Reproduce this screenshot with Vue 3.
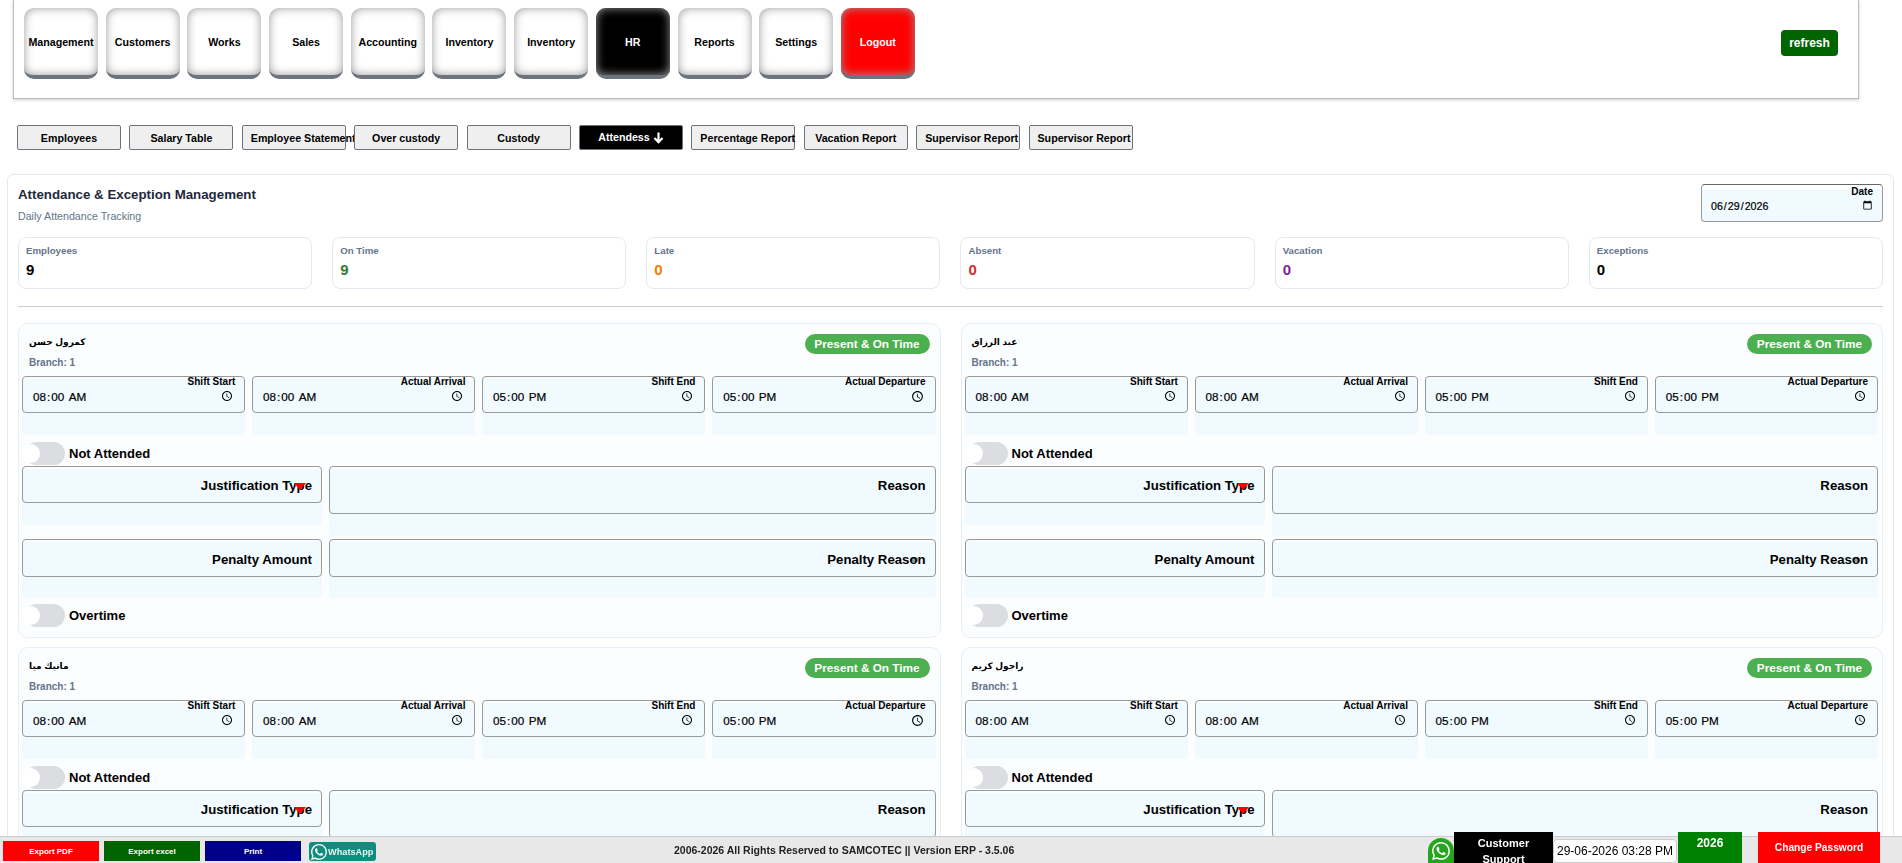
<template>
  <div class="page">
    <header class="topbar">
      <button
        v-for="item in navItems"
        :key="item.id"
        class="nav-btn"
        :class="item.tone"
      >{{ item.label }}</button>
      <button class="refresh">refresh</button>
    </header>

    <nav class="tabs">
      <button v-for="tab in tabs" :key="tab.id" class="tab" :class="{ active: tab.active }">
        {{ tab.label }}
        <svg v-if="tab.active" class="tab-arrow" viewBox="0 0 12 13" width="11" height="13">
          <path d="M6 1v10.5M1.6 7 6 11.6 10.4 7" fill="none" stroke="#fff" stroke-width="2.4" />
        </svg>
      </button>
    </nav>

    <section class="panel">
      <div class="panel-head">
        <div>
          <h1 class="panel-title">Attendance &amp; Exception Management</h1>
          <p class="panel-sub">Daily Attendance Tracking</p>
        </div>
        <div class="date-field">
          <span class="date-label">Date</span>
          <input type="date" value="2026-06-29" />
        </div>
      </div>

      <div class="stats">
        <div v-for="stat in stats" :key="stat.label" class="stat">
          <div class="stat-label">{{ stat.label }}</div>
          <div class="stat-value" :style="{ color: stat.color }">{{ stat.value }}</div>
        </div>
      </div>

      <hr class="divider" />

      <div class="employees">
        <article v-for="emp in employees" :key="emp.name" class="emp">
          <div class="emp-head">
            <div>
              <div class="emp-name" dir="rtl">{{ emp.name }}</div>
              <div class="emp-branch">Branch: {{ emp.branch }}</div>
            </div>
            <span class="pill">Present &amp; On Time</span>
          </div>

          <div class="times">
            <div v-for="t in timeFields" :key="t.label" class="slot">
              <div class="box time-box">
                <span class="time-label">{{ t.label }}</span>
                <input type="time" :value="t.value" />
              </div>
            </div>
          </div>

          <label class="switch-row">
            <span class="switch"><span class="knob"></span></span>
            Not Attended
          </label>

          <div class="pair">
            <div class="slot slot-just">
              <div class="box text-box">
                Justification Type
                <span class="caret"></span>
              </div>
            </div>
            <div class="slot">
              <div class="box text-box tall">Reason</div>
            </div>
          </div>

          <div class="pair second">
            <div class="slot slot-low">
              <div class="box text-box low">Penalty Amount</div>
            </div>
            <div class="slot slot-low">
              <div class="box text-box low">
                <span class="blob"></span>
                <span class="over">Penalty Reason</span>
              </div>
            </div>
          </div>

          <label class="switch-row last">
            <span class="switch"><span class="knob"></span></span>
            Overtime
          </label>
        </article>
      </div>
    </section>

    <footer class="footer">
      <button class="foot-btn pdf">Export PDF</button>
      <button class="foot-btn excel">Export excel</button>
      <button class="foot-btn print">Print</button>
      <a class="wa-btn">
        <svg viewBox="0 0 24 24" width="16" height="16"><path :d="waPath" fill="#fff" /></svg>
        WhatsApp
      </a>
      <div class="copyright">2006-2026 All Rights Reserved to SAMCOTEC || Version ERP - 3.5.06</div>
      <div class="foot-right">
        <span class="wa-round">
          <svg viewBox="0 0 24 24" width="18" height="18"><path :d="waPath" fill="#fff" /></svg>
        </span>
        <div class="support">Customer Support</div>
        <div class="clock">29-06-2026 03:28 PM</div>
        <div class="year">2026</div>
        <button class="change-pass">Change Password</button>
      </div>
    </footer>
  </div>
</template>

<script setup>
const navLabels = ['Management', 'Customers', 'Works', 'Sales', 'Accounting', 'Inventory', 'Inventory', 'HR', 'Reports', 'Settings', 'Logout']
const navItems = navLabels.map((label, id) => ({
  id,
  label,
  tone: label === 'HR' ? 'dark' : label === 'Logout' ? 'danger' : ''
}))

const tabLabels = ['Employees', 'Salary Table', 'Employee Statement', 'Over custody', 'Custody', 'Attendess', 'Percentage Report', 'Vacation Report', 'Supervisor Report', 'Supervisor Report']
const tabs = tabLabels.map((label, id) => ({ id, label, active: label === 'Attendess' }))

const stats = [
  { label: 'Employees', value: 9, color: '#000' },
  { label: 'On Time', value: 9, color: '#2e7d32' },
  { label: 'Late', value: 0, color: '#f57c00' },
  { label: 'Absent', value: 0, color: '#d32f2f' },
  { label: 'Vacation', value: 0, color: '#7b1fa2' },
  { label: 'Exceptions', value: 0, color: '#000' }
]

const timeFields = [
  { label: 'Shift Start', value: '08:00' },
  { label: 'Actual Arrival', value: '08:00' },
  { label: 'Shift End', value: '17:00' },
  { label: 'Actual Departure', value: '17:00' }
]

const employees = [
  { name: 'كمرول حسن', branch: 1 },
  { name: 'عبد الرزاق', branch: 1 },
  { name: 'مانيك ميا', branch: 1 },
  { name: 'راجول كريم', branch: 1 }
]

const waPath = 'M17.472 14.382c-.297-.149-1.758-.867-2.03-.967-.273-.099-.471-.148-.67.15-.197.297-.767.966-.94 1.164-.173.199-.347.223-.644.075-.297-.15-1.255-.463-2.39-1.475-.883-.788-1.48-1.761-1.653-2.059-.173-.297-.018-.458.13-.606.134-.133.298-.347.446-.52.149-.174.198-.298.298-.497.099-.198.05-.371-.025-.52-.075-.149-.669-1.612-.916-2.207-.242-.579-.487-.5-.669-.51-.173-.008-.371-.01-.57-.01-.198 0-.52.074-.792.372-.272.297-1.04 1.016-1.04 2.479 0 1.462 1.065 2.875 1.213 3.074.149.198 2.096 3.2 5.077 4.487.709.306 1.262.489 1.694.625.712.227 1.36.195 1.871.118.571-.085 1.758-.719 2.006-1.413.248-.694.248-1.289.173-1.413-.074-.124-.272-.198-.57-.347m-5.421 7.403h-.004a9.87 9.87 0 01-5.031-1.378l-.361-.214-3.741.982.998-3.648-.235-.374a9.86 9.86 0 01-1.51-5.26c.001-5.45 4.436-9.884 9.888-9.884 2.64 0 5.122 1.03 6.988 2.898a9.825 9.825 0 012.893 6.994c-.003 5.45-4.437 9.884-9.885 9.884m8.413-18.297A11.815 11.815 0 0012.05 0C5.495 0 .16 5.335.157 11.892c0 2.096.547 4.142 1.588 5.945L.057 24l6.305-1.654a11.882 11.882 0 005.683 1.448h.005c6.554 0 11.89-5.335 11.893-11.893a11.821 11.821 0 00-3.48-8.413z'
</script>

<style>
html,
body {
  margin: 0;
  height: 100%;
  overflow: hidden;
  background: #fff;
}
</style>

<style scoped>
* {
  box-sizing: border-box;
}

.page {
  font-family: "Liberation Sans", "DejaVu Sans", sans-serif;
  color: #000;
  height: 863px;
  overflow: hidden;
}

button {
  font-family: inherit;
}

/* top menu */
.topbar {
  display: flex;
  align-items: flex-start;
  gap: 7.7px;
  width: 1846px;
  height: 99px;
  margin-left: 13px;
  padding: 8px 0 0 10px;
  border: 1px solid #bbb;
  border-top: 0;
  box-shadow: 0 1px 3px rgba(0, 0, 0, 0.2);
}

.nav-btn {
  width: 74px;
  height: 71px;
  padding: 0;
  border: 0;
  border-bottom: 4px solid #6c757d;
  border-radius: 10px;
  background: #fff;
  box-shadow: inset 0 0 10px #999;
  font-size: 10.67px;
  font-weight: 700;
  color: #000;
}

.nav-btn.dark {
  background: #000;
  color: #fff;
}

.nav-btn.danger {
  background: #f00;
  color: #fff;
}

.refresh {
  width: 57px;
  height: 26px;
  margin: 22px 20px 0 auto;
  padding: 0;
  border: 0;
  border-radius: 4px;
  background: #006400;
  color: #fff;
  font-size: 12px;
  font-weight: 700;
}

/* sub menu */
.tabs {
  display: flex;
  gap: 8.4px;
  margin-top: 26px;
  padding-left: 17px;
}

.tab {
  width: 104px;
  height: 25px;
  padding: 0 8px;
  border: 1px solid #6c757d;
  border-bottom-width: 1.5px;
  border-radius: 2px;
  background: #efefef;
  color: #000;
  font-size: 10.67px;
  font-weight: 700;
  white-space: nowrap;
}

.tab.active {
  background: #000;
  color: #fff;
}

.tab-arrow {
  vertical-align: -3px;
}

/* panel */
.panel {
  width: 1887px;
  margin: 24px 0 0 7px;
  padding: 9px 10px 0;
  border: 1px solid #e2e8f0;
  border-radius: 6px;
}

.panel-head {
  display: flex;
  justify-content: space-between;
  align-items: flex-start;
  height: 38px;
}

.panel-title {
  margin: 3px 0 0;
  font-size: 13.3px;
  line-height: 15px;
  font-weight: 700;
  color: #1e293b;
}

.panel-sub {
  margin: 8px 0 0;
  font-size: 10.67px;
  line-height: 12px;
  color: #64748b;
}

.date-field {
  position: relative;
  width: 182px;
  height: 38px;
  border: 1px solid #999;
  border-top-color: #666;
  border-radius: 4px;
  background: linear-gradient(#fff 4px, #f0faff 4px);
}

.date-label {
  position: absolute;
  top: 0;
  right: 9px;
  font-size: 10px;
  line-height: 13px;
  font-weight: 700;
}

.date-field input {
  width: 100%;
  height: 100%;
  padding: 5px 7px 0 8px;
  border: 0;
  outline: 0;
  background: transparent;
  font-family: inherit;
  font-size: 10.67px;
  color: #000;
  -webkit-text-stroke: 0.2px #000;
}

.stats {
  display: grid;
  grid-template-columns: repeat(6, 1fr);
  gap: 20px;
  margin-top: 15px;
}

.stat {
  height: 52px;
  padding: 7px 7px;
  border: 1px solid #e2e8f0;
  border-radius: 8px;
  background: #fff;
}

.stat-label {
  font-size: 9.7px;
  line-height: 12px;
  font-weight: 700;
  color: #64748b;
}

.stat-value {
  margin-top: 4px;
  font-size: 15px;
  line-height: 18px;
  font-weight: 700;
}

.divider {
  height: 1px;
  margin: 17px 0 16px;
  border: 0;
  background: #ccc;
}

/* employee cards */
.employees {
  display: grid;
  grid-template-columns: 1fr 1fr;
  gap: 9px 20px;
}

.emp {
  height: 315px;
  padding: 0 4px 0 3px;
  border: 1px solid #e8eef5;
  border-radius: 10px;
  background: #fbfdff;
}

.emp-head {
  display: flex;
  justify-content: space-between;
  align-items: flex-start;
  height: 52px;
  padding: 10px 6px 0 7px;
}

.emp-name {
  font-size: 9px;
  line-height: 16px;
  font-weight: 700;
  text-align: left;
}

.emp-branch {
  margin-top: 7px;
  font-size: 10px;
  line-height: 12px;
  font-weight: 700;
  color: #64748b;
}

.pill {
  width: 125px;
  height: 20px;
  border-radius: 10px;
  background: #4caf50;
  color: #fff;
  font-size: 11.8px;
  line-height: 20px;
  font-weight: 700;
  text-align: center;
}

.times {
  display: grid;
  grid-template-columns: repeat(4, 1fr);
  gap: 6.7px;
}

.slot {
  padding-bottom: 22px;
  border-radius: 4px;
  background: linear-gradient(transparent 3px, #f0faff 3px);
}

.slot-low {
  padding-bottom: 21px;
}

.box {
  position: relative;
  border: 1px solid #999;
  border-radius: 4px;
}

.time-box {
  height: 37px;
}

.time-label {
  position: absolute;
  top: -1px;
  right: 9px;
  font-size: 10px;
  line-height: 12px;
  font-weight: 700;
}

.time-box input {
  width: 100%;
  height: 100%;
  padding: 4px 8px 0 9px;
  border: 0;
  outline: 0;
  background: transparent;
  font-family: inherit;
  font-size: 11.7px;
  color: #000;
  -webkit-text-stroke: 0.2px #000;
}

.switch-row {
  display: flex;
  align-items: center;
  gap: 4px;
  height: 23px;
  margin: 7px 0 1px 3px;
  font-size: 13px;
  font-weight: 700;
}

.switch-row.last {
  margin-top: 6px;
}

.switch {
  position: relative;
  width: 40px;
  height: 23px;
  border-radius: 12px;
  background: #dcdde0;
}

.knob {
  position: absolute;
  top: 2px;
  left: -4px;
  width: 19px;
  height: 19px;
  border-radius: 50%;
  background: #fff;
}

.pair {
  display: grid;
  grid-template-columns: 300px 1fr;
  gap: 7px;
  align-items: start;
}

.pair.second {
  margin-top: 3px;
}

.text-box {
  display: flex;
  align-items: center;
  justify-content: flex-end;
  height: 37px;
  padding: 1px 9px 0 0;
  font-size: 13.2px;
  font-weight: 700;
}

.text-box.tall {
  align-items: flex-start;
  height: 48px;
  padding-top: 11px;
}

.text-box.low {
  height: 38px;
  padding-top: 2px;
}

.caret {
  position: absolute;
  right: 15px;
  top: 16px;
  border-left: 6px solid transparent;
  border-right: 6px solid transparent;
  border-top: 7px solid #f00;
}

.blob {
  position: absolute;
  right: 17px;
  top: 17px;
  width: 8px;
  height: 5px;
  border-radius: 3px;
  background: #8fa3a8;
}

.over {
  position: relative;
}

/* footer */
.footer {
  position: fixed;
  left: 0;
  right: 0;
  bottom: 0;
  display: flex;
  align-items: flex-end;
  height: 27px;
  padding-left: 3px;
  border-top: 1px solid #ccc;
  background: #e8e8e8;
}

.foot-btn {
  width: 96px;
  height: 20px;
  margin: 0 5px 2px 0;
  padding: 0;
  border: 0;
  color: #fff;
  font-size: 8px;
  font-weight: 700;
}

.pdf {
  background: #f00;
}

.excel {
  background: #006400;
}

.print {
  background: #00008b;
}

.wa-btn {
  display: flex;
  align-items: center;
  gap: 1px;
  width: 67px;
  height: 19px;
  margin: 0 0 2px 3px;
  padding-left: 2px;
  border-radius: 3px;
  background: #128c7e;
  color: #e8f5f2;
  font-size: 9.2px;
  font-weight: 700;
}

.copyright {
  align-self: center;
  margin-left: 298px;
  font-size: 10.5px;
  font-weight: 700;
  color: #222;
  white-space: nowrap;
}

.foot-right {
  display: flex;
  align-items: flex-end;
  margin-left: auto;
  margin-right: 22px;
}

.wa-round {
  display: flex;
  align-items: center;
  justify-content: center;
  width: 26px;
  height: 25px;
  border-radius: 13px 13px 0 0;
  background: #25a51e;
}

.support {
  width: 99px;
  height: 31px;
  padding: 3px 15px 0;
  background: #000;
  color: #fff;
  font-size: 11px;
  line-height: 16px;
  font-weight: 700;
  text-align: center;
}

.clock {
  width: 124px;
  height: 24px;
  border: 1px solid #ccc;
  border-radius: 4px;
  background: #fff;
  font-size: 12px;
  line-height: 22px;
  text-align: center;
}

.year {
  width: 64px;
  height: 31px;
  padding-top: 4px;
  margin-left: 1px;
  background: #008000;
  color: #fff;
  font-size: 12px;
  line-height: 14px;
  font-weight: 700;
  text-align: center;
}

.change-pass {
  width: 122px;
  height: 31px;
  margin-left: 16px;
  padding: 0;
  border: 0;
  background: #f00;
  color: #fff;
  font-size: 10.2px;
  font-weight: 700;
}
</style>
